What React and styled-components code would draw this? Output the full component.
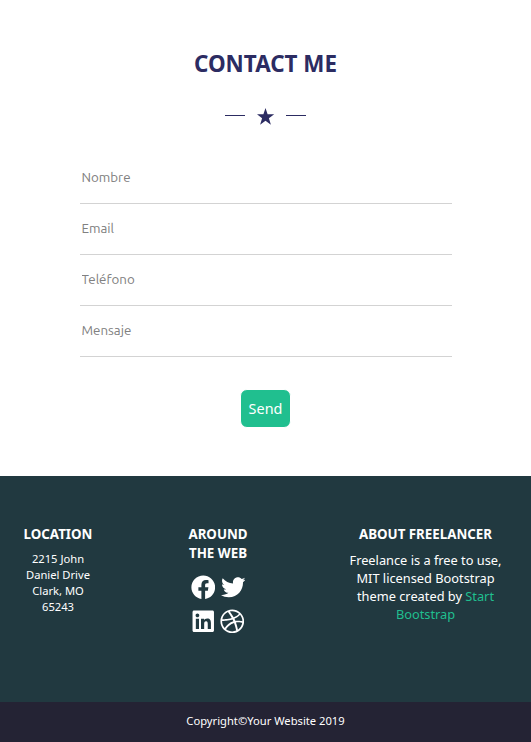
import React from "react";
import styled, { createGlobalStyle } from "styled-components";
import { FaFacebook, FaTwitter, FaLinkedin, FaDribbble } from "react-icons/fa";

const GlobalStyle = createGlobalStyle`
  * { box-sizing: border-box; }
  body {
    margin: 0;
    background: #fff;
    font-family: "Noto Sans", "Open Sans", sans-serif;
  }
`;

const Page = styled.div`
  display: flex;
  flex-direction: column;
  height: 742px;
  overflow: hidden;
`;

const Contact = styled.section`
  display: flex;
  flex-direction: column;
  align-items: center;
  height: 476px;
  padding-top: 48px;
`;

const Title = styled.h2`
  margin: 0;
  color: #2c2c62;
  font-size: 22.4px;
  line-height: 32px;
  font-weight: 700;
`;

const Divider = styled.div`
  display: flex;
  align-items: center;
  justify-content: space-between;
  width: 81px;
  height: 17px;
  margin-top: 28px;
`;

const Rule = styled.span`
  width: 20px;
  height: 1px;
  margin-bottom: 3px;
  background: #2c2c62;
`;

const Star = styled.svg`
  width: 18px;
  height: 17px;
  fill: #2c2c62;
`;

const Form = styled.form`
  display: flex;
  flex-direction: column;
  align-items: center;
  width: 372px;
  margin-top: 28px;
`;

const Field = styled.input`
  width: 100%;
  height: 51px;
  padding: 0 2px 1px;
  border: 0;
  border-bottom: 1px solid #d3d3d3;
  outline: 0;
  background: transparent;
  font-family: Ubuntu, "Noto Sans", sans-serif;
  font-size: 13.333px;

  &::placeholder {
    color: #808080;
    opacity: 1;
  }
`;

const SendButton = styled.button`
  width: 51px;
  height: 39px;
  margin-top: 32px;
  padding: 0;
  border: 1px solid #fff;
  border-radius: 7px;
  background: #20bf8f;
  color: #fff;
  font-family: inherit;
  font-size: 14.4px;
  line-height: 37px;
`;

const Footer = styled.footer`
  display: grid;
  grid-template-columns: 116px 204px 211px;
  height: 226px;
  padding-top: 49px;
  background: #213940;
  color: #fff;
  text-align: center;
`;

const Column = styled.div`
  display: flex;
  flex-direction: column;
  align-items: center;
`;

const Heading = styled.h3`
  margin: 0;
  width: ${(p) => p.$width || "auto"};
  font-size: 13.333px;
  line-height: 19px;
  font-weight: 700;
`;

const Address = styled.p`
  width: 76px;
  margin: 7px 0 0;
  font-size: 11.2px;
  line-height: 16px;
`;

const About = styled.p`
  width: 164px;
  margin: 7px 0 0;
  font-size: 12.8px;
  line-height: 18px;
`;

const ThemeLink = styled.a`
  color: #20bf8f;
`;

const Socials = styled.div`
  display: flex;
  flex-direction: column;
  gap: 9.5px;
  margin-top: 12px;
`;

const SocialRow = styled.div`
  display: flex;
  gap: ${(p) => p.$gap};
  font-size: 24.5px;

  svg { display: block; }
`;

const Copyright = styled.div`
  height: 40px;
  background: #242334;
  color: #fff;
  font-size: 11.2px;
  line-height: 38px;
  text-align: center;
`;

const fields = ["Nombre", "Email", "Teléfono", "Mensaje"];

export default function App() {
  return (
    <>
      <GlobalStyle />
      <Page>
        <Contact>
          <Title>CONTACT ME</Title>
          <Divider>
            <Rule />
            <Star viewBox="0 0 18 17" aria-hidden="true">
              <path d="M8.5 0L10.6 6.2H17.2L11.9 10.2L13.9 16.7L8.5 12.8L3.1 16.7L5.1 10.2L-.2 6.2H6.4Z" />
            </Star>
            <Rule />
          </Divider>
          <Form>
            {fields.map((label) => (
              <Field key={label} placeholder={label} />
            ))}
            <SendButton type="button">Send</SendButton>
          </Form>
        </Contact>
        <Footer>
          <Column>
            <Heading>LOCATION</Heading>
            <Address>2215 John Daniel Drive Clark, MO 65243</Address>
          </Column>
          <Column>
            <Heading $width="68px">AROUND THE WEB</Heading>
            <Socials>
              <SocialRow $gap="5.5px">
                <FaFacebook />
                <FaTwitter />
              </SocialRow>
              <SocialRow $gap="4.5px">
                <FaLinkedin />
                <FaDribbble />
              </SocialRow>
            </Socials>
          </Column>
          <Column>
            <Heading>ABOUT FREELANCER</Heading>
            <About>
              Freelance is a free to use, MIT licensed Bootstrap theme created by{" "}
              <ThemeLink>Start Bootstrap</ThemeLink>
            </About>
          </Column>
        </Footer>
        <Copyright>Copyright©Your Website 2019</Copyright>
      </Page>
    </>
  );
}
